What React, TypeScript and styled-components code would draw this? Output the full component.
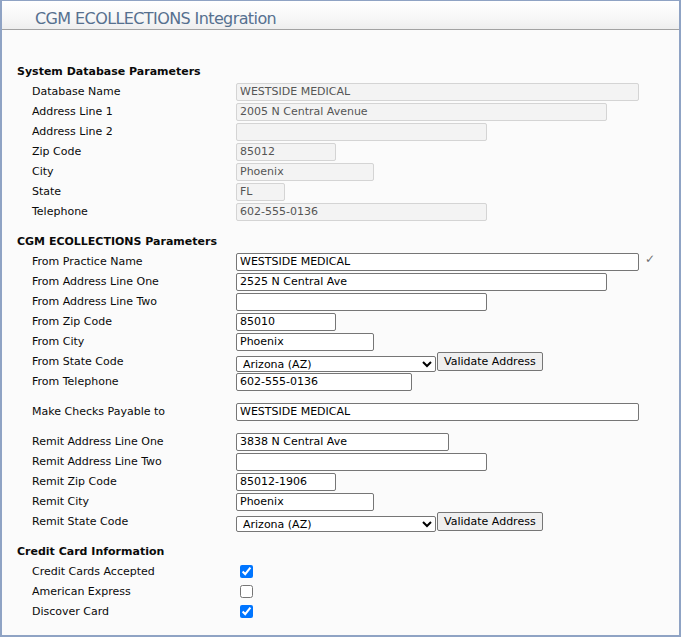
import React from 'react';
import styled, { createGlobalStyle } from 'styled-components';

const GlobalStyle = createGlobalStyle`
  html, body {
    margin: 0;
    padding: 0;
    background: #ffffff;
  }
  * {
    box-sizing: border-box;
  }
`;

const Frame = styled.div`
  width: 681px;
  height: 637px;
  border: 2px solid #8fa3c4;
  border-top-width: 1px;
  background: #fbfbfb;
  font-family: 'DejaVu Sans', Verdana, sans-serif;
  font-size: 11px;
  color: #0a0a0a;
  display: flex;
  flex-direction: column;
`;

const Header = styled.div`
  height: 29px;
  flex-shrink: 0;
  background: linear-gradient(to bottom, #ffffff 0%, #f7f7f7 60%, #eeeeee 100%);
  border-bottom: 1px solid #a2a2a2;
  padding: 0 0 0 33px;
  display: flex;
  align-items: flex-end;
`;

const Title = styled.h1`
  margin: 0;
  font-size: 16px;
  line-height: 20px;
  font-weight: normal;
  color: #56708f;
  letter-spacing: -0.6px;
`;

const Body = styled.div`
  padding: 31px 0 0 15px;
  display: flex;
  flex-direction: column;
  gap: 10px;
`;

const Section = styled.div`
  display: flex;
  flex-direction: column;
`;

const SectionTitle = styled.div`
  height: 20px;
  padding-top: 2px;
  line-height: 18px;
  font-weight: bold;
`;

const Row = styled.div<{ $gapAfter?: boolean }>`
  display: grid;
  grid-template-columns: 204px 1fr;
  height: 20px;
  align-items: center;
  padding-left: 15px;
  padding-top: 1px;
  margin-bottom: ${p => (p.$gapAfter ? '10px' : '0')};
`;

const Label = styled.label`
  white-space: nowrap;
`;

const Field = styled.div`
  display: flex;
  align-items: center;
  gap: 1px;
`;

const TextInput = styled.input<{ $w: number; $readOnly?: boolean }>`
  width: ${p => p.$w}px;
  height: 18px;
  margin: 0;
  padding: 0 3px;
  font-family: inherit;
  font-size: 11px;
  border: 1px solid ${p => (p.$readOnly ? '#d4d4d4' : '#767676')};
  border-radius: 2px;
  background: ${p => (p.$readOnly ? '#f3f3f3' : '#ffffff')};
  color: ${p => (p.$readOnly ? '#555555' : '#000000')};
  outline: none;
`;

const Select = styled.select`
  width: 200px;
  height: 16px;
  margin: 0;
  padding: 0 0 0 2px;
  font-family: inherit;
  font-size: 11px;
  border: 1px solid #767676;
  border-radius: 2px;
  background: #ffffff;
  color: #000;
  align-self: flex-end;
  margin-bottom: -1px;
`;

const Button = styled.button`
  height: 19px;
  margin: 0;
  padding: 0 6px;
  font-family: inherit;
  font-size: 11px;
  color: #000;
  background: #efefef;
  border: 1px solid #767676;
  border-radius: 2px;
`;

const Tick = styled.span`
  color: #6f6f6f;
  font-size: 12px;
  margin-left: 5px;
  margin-top: -5px;
`;

const Check = styled.input`
  width: 13px;
  height: 13px;
  margin: 0 0 0 4px;
  accent-color: #0075ff;
`;

type Item = { label: string; value?: string; w: number };

const systemFields: Item[] = [
  { label: 'Database Name', value: 'WESTSIDE MEDICAL', w: 403 },
  { label: 'Address Line 1', value: '2005 N Central Avenue', w: 371 },
  { label: 'Address Line 2', value: '', w: 251 },
  { label: 'Zip Code', value: '85012', w: 100 },
  { label: 'City', value: 'Phoenix', w: 138 },
  { label: 'State', value: 'FL', w: 49 },
  { label: 'Telephone', value: '602-555-0136', w: 251 },
];

const StateSelect: React.FC = () => (
  <Field>
    <Select defaultValue="AZ">
      <option value="AZ">Arizona (AZ)</option>
      <option value="FL">Florida (FL)</option>
    </Select>
    <Button type="button">Validate Address</Button>
  </Field>
);

export default function App() {
  return (
    <>
      <GlobalStyle />
      <Frame>
        <Header>
          <Title>CGM ECOLLECTIONS Integration</Title>
        </Header>
        <Body>
          <Section>
            <SectionTitle>System Database Parameters</SectionTitle>
            {systemFields.map(f => (
              <Row key={f.label}>
                <Label>{f.label}</Label>
                <Field>
                  <TextInput $readOnly readOnly $w={f.w} defaultValue={f.value} />
                </Field>
              </Row>
            ))}
          </Section>

          <Section>
            <SectionTitle>CGM ECOLLECTIONS Parameters</SectionTitle>
            <Row>
              <Label>From Practice Name</Label>
              <Field>
                <TextInput $w={403} defaultValue="WESTSIDE MEDICAL" />
                <Tick>✓</Tick>
              </Field>
            </Row>
            <Row>
              <Label>From Address Line One</Label>
              <Field><TextInput $w={371} defaultValue="2525 N Central Ave" /></Field>
            </Row>
            <Row>
              <Label>From Address Line Two</Label>
              <Field><TextInput $w={251} defaultValue="" /></Field>
            </Row>
            <Row>
              <Label>From Zip Code</Label>
              <Field><TextInput $w={100} defaultValue="85010" /></Field>
            </Row>
            <Row>
              <Label>From City</Label>
              <Field><TextInput $w={138} defaultValue="Phoenix" /></Field>
            </Row>
            <Row>
              <Label>From State Code</Label>
              <StateSelect />
            </Row>
            <Row $gapAfter>
              <Label>From Telephone</Label>
              <Field><TextInput $w={176} defaultValue="602-555-0136" /></Field>
            </Row>
            <Row $gapAfter>
              <Label>Make Checks Payable to</Label>
              <Field><TextInput $w={403} defaultValue="WESTSIDE MEDICAL" /></Field>
            </Row>
            <Row>
              <Label>Remit Address Line One</Label>
              <Field><TextInput $w={213} defaultValue="3838 N Central Ave" /></Field>
            </Row>
            <Row>
              <Label>Remit Address Line Two</Label>
              <Field><TextInput $w={251} defaultValue="" /></Field>
            </Row>
            <Row>
              <Label>Remit Zip Code</Label>
              <Field><TextInput $w={100} defaultValue="85012-1906" /></Field>
            </Row>
            <Row>
              <Label>Remit City</Label>
              <Field><TextInput $w={138} defaultValue="Phoenix" /></Field>
            </Row>
            <Row>
              <Label>Remit State Code</Label>
              <StateSelect />
            </Row>
          </Section>

          <Section>
            <SectionTitle>Credit Card Information</SectionTitle>
            <Row>
              <Label>Credit Cards Accepted</Label>
              <Field><Check type="checkbox" defaultChecked /></Field>
            </Row>
            <Row>
              <Label>American Express</Label>
              <Field><Check type="checkbox" /></Field>
            </Row>
            <Row>
              <Label>Discover Card</Label>
              <Field><Check type="checkbox" defaultChecked /></Field>
            </Row>
          </Section>
        </Body>
      </Frame>
    </>
  );
}
